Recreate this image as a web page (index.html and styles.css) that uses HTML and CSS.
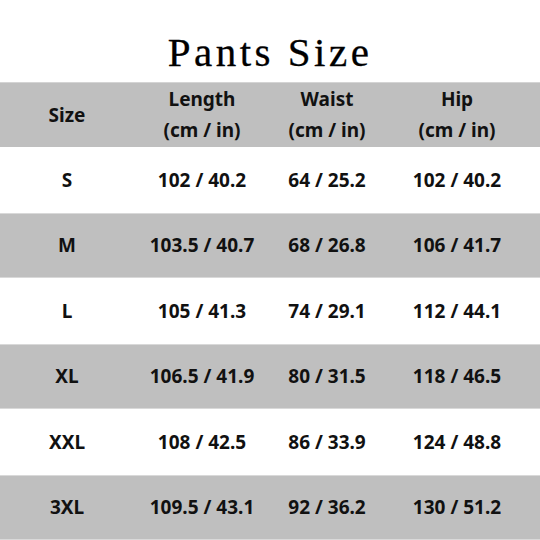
FILE: index.html
```html
<!DOCTYPE html>
<html>
<head>
<meta charset="utf-8">
<link rel="stylesheet" href="styles.css">
</head>
<body>
<h1 class="title">Pants Size</h1>
<div class="table">
  <div class="row head">
    <div class="cell">Size</div>
    <div class="cell">Length<br>(cm / in)</div>
    <div class="cell">Waist<br>(cm / in)</div>
    <div class="cell">Hip<br>(cm / in)</div>
  </div>
  <div class="row">
    <div class="cell">S</div><div class="cell">102 / 40.2</div><div class="cell">64 / 25.2</div><div class="cell">102 / 40.2</div>
  </div>
  <div class="row gray">
    <div class="cell">M</div><div class="cell">103.5 / 40.7</div><div class="cell">68 / 26.8</div><div class="cell">106 / 41.7</div>
  </div>
  <div class="row">
    <div class="cell">L</div><div class="cell">105 / 41.3</div><div class="cell">74 / 29.1</div><div class="cell">112 / 44.1</div>
  </div>
  <div class="row gray">
    <div class="cell">XL</div><div class="cell">106.5 / 41.9</div><div class="cell">80 / 31.5</div><div class="cell">118 / 46.5</div>
  </div>
  <div class="row">
    <div class="cell">XXL</div><div class="cell">108 / 42.5</div><div class="cell">86 / 33.9</div><div class="cell">124 / 48.8</div>
  </div>
  <div class="row gray">
    <div class="cell">3XL</div><div class="cell">109.5 / 43.1</div><div class="cell">92 / 36.2</div><div class="cell">130 / 51.2</div>
  </div>
</div>
</body>
</html>
```

FILE: styles.css
```css
html, body {
  margin: 0;
  padding: 0;
  background: #fff;
}
body {
  width: 540px;
  height: 540px;
  overflow: hidden;
}
.title {
  box-sizing: border-box;
  height: 82px;
  margin: 0;
  padding-top: 29px;
  font-family: "Liberation Serif", serif;
  font-weight: normal;
  font-size: 41px;
  line-height: 47px;
  letter-spacing: 3.5px;
  text-align: center;
  color: #000;
  -webkit-text-stroke: 0.3px #000;
}
.table {
  font-family: "Noto Sans", "Open Sans", sans-serif;
  font-weight: 700;
  font-size: 19px;
  color: #111;
}
.row {
  box-sizing: border-box;
  display: grid;
  grid-template-columns: 134px 136px 114px 146px 1fr;
  align-items: center;
  height: 65.5px;
}
.row.head {
  height: 65px;
  line-height: 31px;
  background: #bfbfbf;
  border-top: 1px solid #d4d4d4;
}
.row.gray {
  background: #bfbfbf;
  border-top: 1px solid #d9d9d9;
  border-bottom: 1px solid #d9d9d9;
}
.cell {
  text-align: center;
  white-space: nowrap;
}
```
